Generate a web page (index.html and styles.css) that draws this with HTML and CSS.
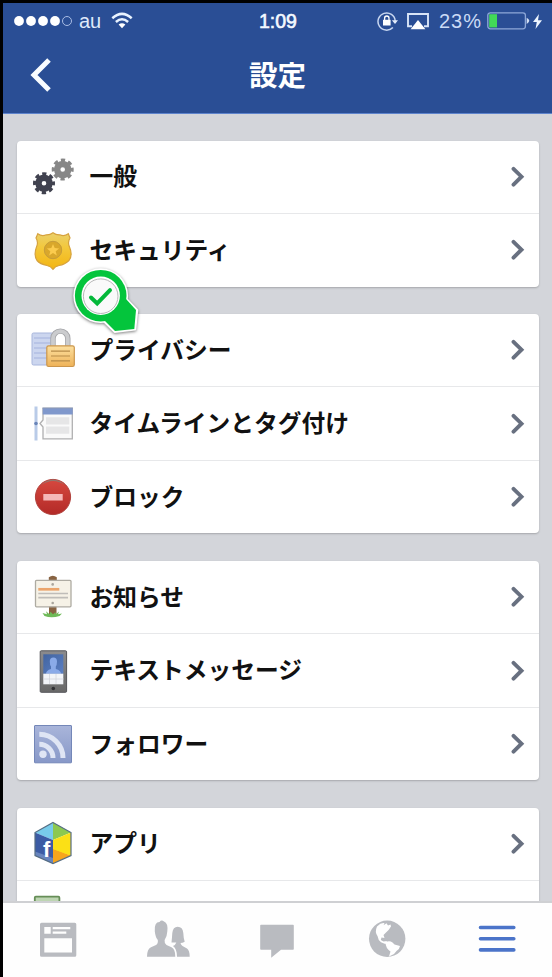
FILE: index.html
```html
<!DOCTYPE html>
<html lang="ja">
<head>
<meta charset="utf-8">
<title>設定</title>
<link rel="stylesheet" href="styles.css">
</head>
<body>
<svg width="0" height="0" class="defs">
  <defs>
    <symbol id="chevron" viewBox="0 0 14 22"><path d="M2.5 2.8L10.5 10.7L2.5 18.600" fill="none" stroke="#687080" stroke-width="3.9" stroke-linecap="round"/></symbol>
    <linearGradient id="gold" x2="0" y2="1"><stop offset="0" stop-color="#ead06c"/><stop offset=".4" stop-color="#f3c83c"/><stop offset="1" stop-color="#f3b512"/></linearGradient>
    <linearGradient id="lock" x2="0" y2="1"><stop offset="0" stop-color="#fce0a0"/><stop offset="1" stop-color="#eeb258"/></linearGradient>
    <linearGradient id="red" x2="0" y2="1"><stop offset="0" stop-color="#d6483f"/><stop offset="1" stop-color="#b32a27"/></linearGradient>
    <linearGradient id="rss" x2="0" y2="1"><stop offset="0" stop-color="#a9b5da"/><stop offset="1" stop-color="#8798c8"/></linearGradient>
    <linearGradient id="screen" x2="1" y2="1"><stop offset="0" stop-color="#42649f"/><stop offset="1" stop-color="#5b7fc4"/></linearGradient>
    <linearGradient id="steel" x2="0" y2="1"><stop offset="0" stop-color="#8b8b8d"/><stop offset="1" stop-color="#686868"/></linearGradient>
  </defs>
</svg>
<div class="phone">
  <header class="header">
    <div class="status">
      <div class="status-left">
        <svg class="signal" width="58" height="12" viewBox="0 0 58 12"><g fill="#fff"><circle cx="5" cy="6" r="4.9"/><circle cx="17" cy="6" r="4.9"/><circle cx="29" cy="6" r="4.9"/><circle cx="41" cy="6" r="4.9"/></g><circle cx="53" cy="6" r="4.5" fill="none" stroke="#a9bce4" stroke-width="1"/></svg>
        <span class="carrier">au</span>
        <svg class="wifi" width="22" height="17" viewBox="0 0 22 17"><g fill="none" stroke="#e9f3ff" stroke-width="2.5"><path d="M1.3 6.2Q11-2.4 20.7 6.2"/><path d="M4.9 10Q11 4.6 17.1 10"/></g><path d="M7.6 12.6Q11 9.8 14.4 12.6L11 16.2Z" fill="#fff"/></svg>
      </div>
      <span class="time">1:09</span>
      <div class="status-right">
        <svg width="22" height="20" viewBox="0 0 22 20"><path d="M15.9 16.4A8.6 8.6 0 1 1 18.2 10" fill="none" stroke="#c7d6f0" stroke-width="1.5"/><path d="M14.9 9.2h6.1l-3 3.8z" fill="#e4edfc"/><rect x="6" y="8.8" width="7.6" height="5.7" fill="#fff"/><path d="M7.6 9V7.2a2.2 2.2 0 0 1 4.4 0V9" fill="none" stroke="#fff" stroke-width="1.3"/></svg>
        <svg class="airplay" width="22" height="17" viewBox="0 0 22 17"><path d="M5 13.3H1V1h20v12.3h-4" fill="none" stroke="#d8e4f7" stroke-width="1.9"/><path d="M11 7l7.4 9.2H3.6z" fill="#fff"/></svg>
        <span class="percent">23%</span>
        <svg class="battery" width="43" height="18" viewBox="0 0 43 18"><rect x=".8" y=".8" width="37.6" height="16" rx="2.5" fill="none" stroke="#8ea8d8" stroke-width="1.3"/><rect x="2.2" y="2.2" width="7.8" height="13.2" fill="#42d957"/><path d="M39.7 5.7q5.2 3.1 0 6.2z" fill="#d4e0f3"/></svg>
        <svg class="bolt" width="9" height="15" viewBox="0 0 9 15"><path d="M6 0L0 8h3.800L2.500 15L9 6.200H5z" fill="#edf5ff"/></svg>
      </div>
    </div>
    <div class="navbar">
      <svg class="back" width="22" height="34" viewBox="0 0 22 34"><path d="M19 2L4 17l15 15" fill="none" stroke="#f8fcff" stroke-width="5"/></svg>
      <h1>設定</h1>
    </div>
  </header>

  <main class="content">
    <section class="card">
      <div class="row">
        <svg class="icon" viewBox="0 0 48 48">
          <g fill="none" stroke="#878787"><circle cx="33.700" cy="16.500" r="5.500" stroke-width="6.400"/><circle cx="33.700" cy="16.500" r="9.400" stroke-width="3.200" stroke-dasharray="4.200 3.183" stroke-dashoffset="2.100"/></g>
          <g fill="none" stroke="#40424f"><circle cx="15" cy="30.200" r="5.500" stroke-width="6.400"/><circle cx="15" cy="30.200" r="9.400" stroke-width="3.200" stroke-dasharray="4.200 3.183" stroke-dashoffset="2.100"/></g>
        </svg>
        <span class="label">一般</span><svg class="chev"><use href="#chevron"/></svg>
      </div>
      <div class="row">
        <svg class="icon" viewBox="0 0 48 48">
          <path d="M8.800 7.800Q13 11 17.300 8.800Q21 9 24 6.700Q27 9 30.800 8.800Q35 11 39.300 7.800L41 12Q38.300 16 40.500 21Q44 29 40 34.500Q36 38.500 30 39.500Q26 40.500 24 43.300Q22 40.500 18 39.500Q11 38 8 34.500Q4.500 29 7.500 21Q9.700 16 7 12Z" fill="url(#gold)" stroke="#d6a23e" stroke-width="1.2"/>
          <circle cx="24" cy="24" r="8.700" fill="#d9a72b" stroke="#c69c3a"/><path d="M24 18l1.700 4.100 4.400.3-3.400 2.800 1.100 4.300-3.800-2.400-3.800 2.400 1.100-4.300-3.400-2.800 4.400-.3z" fill="#fbcb4e"/>
        </svg>
        <span class="label">セキュリティ</span><svg class="chev"><use href="#chevron"/></svg>
      </div>
    </section>

    <section class="card">
      <div class="row">
        <svg class="icon" viewBox="0 0 48 48">
          <rect x="3" y="7" width="22" height="32" rx="1.500" fill="#ccd6ef" stroke="#a8b6dc"/>
          <path d="M5 12h18M5 17h16M5 22h14M5 27h14M5 32h14" stroke="#b1bfe3" stroke-width="1.600"/>
          <path d="M24 21V12.500a7.400 7.400 0 0 1 14.800 0V21" fill="none" stroke="#a4a5a8" stroke-width="5.400"/><path d="M24 21V12.500a7.400 7.400 0 0 1 14.800 0V21" fill="none" stroke="#cbccce" stroke-width="3.800"/>
          <rect x="17.800" y="19.800" width="27.500" height="20.700" rx="1.800" fill="url(#lock)" stroke="#cb964c" stroke-width="1.200"/>
          <path d="M22 25.200h19M22 30h19M22 34.800h19" stroke="#b78c48" stroke-width="1.200"/>
        </svg>
        <span class="label">プライバシー</span><svg class="chev"><use href="#chevron"/></svg>
      </div>
      <div class="row">
        <svg class="icon" viewBox="0 0 48 48">
          <rect x="5.500" y="6.500" width="3" height="34" fill="#b9cbe8"/><circle cx="7" cy="23.500" r="1.800" fill="#6985b8"/>
          <path d="M14 8.500h29.300v30.300H14V27l-3-3.500 3-3.500z" fill="#fafafa" stroke="#b0b0b1" stroke-width="1.300"/>
          <rect x="13.700" y="8" width="30" height="6.500" fill="#8098cc"/><path d="M13.500 8h30.400" stroke="#8b98b4"/>
          <path d="M17 17.300h23.300v7.200H17zM17 26.500h23.300v7.200H17z" fill="#e6e6e7"/>
        </svg>
        <span class="label">タイムラインとタグ付け</span><svg class="chev"><use href="#chevron"/></svg>
      </div>
      <div class="row">
        <svg class="icon" viewBox="0 0 48 48">
          <circle cx="24" cy="24" r="17.600" fill="url(#red)" stroke="#b1423d"/><path d="M11.500 12.500Q24 .5 36.500 12.500Q24 3.500 11.500 12.500Z" fill="#93766d"/>
          <rect x="14.300" y="21" width="19.400" height="6.500" fill="#f5b7b7"/>
        </svg>
        <span class="label">ブロック</span><svg class="chev"><use href="#chevron"/></svg>
      </div>
    </section>

    <section class="card">
      <div class="row">
        <svg class="icon" viewBox="0 0 48 48">
          <path d="M19.800 8V4.300q4-3 8 0V8zM20 33h7.500v9H20z" fill="#886342"/>
          <path d="M13.500 40l4.500 1.200-1-3 3.500 3 1-2.500 2.500 2.500 2.500-2 .5 2 3-2.700-1 2.700 4-.7-2.500 2.500q-8 2.500-15 0z" fill="#6fba58"/>
          <rect x="6.500" y="7.300" width="35.500" height="26.500" rx="1" fill="#f6f2e7" stroke="#aeaba2" stroke-width="1.300"/>
          <path d="M9.300 16.300h21" stroke="#eba56c" stroke-width="2.700"/><path d="M9.300 20.500H39M9.300 24.700H39" stroke="#bfbdb9" stroke-width="1.700"/>
          <circle cx="23.700" cy="11.400" r="1.300" fill="#aaa69d"/><circle cx="23.700" cy="30" r="1.300" fill="#aaa69d"/>
        </svg>
        <span class="label">お知らせ</span><svg class="chev"><use href="#chevron"/></svg>
      </div>
      <div class="row">
        <svg class="icon" viewBox="0 0 48 48">
          <rect x="11.200" y="3.800" width="26.400" height="41.500" rx="1" fill="url(#steel)" stroke="#55565a"/>
          <rect x="14.300" y="7.300" width="20" height="19.500" fill="url(#screen)"/>
          <path d="M17 26.700Q17 23.500 22 22V19.500Q20.800 18 20.800 14.500Q20.800 10.500 24.400 10.500T28 14.500Q28 18 26.800 19.500V22Q32 23.500 32 26.700Z" fill="#8aaae8"/>
          <rect x="14.300" y="26.700" width="20" height="10.600" fill="#f2f4f8"/><path d="M20.500 27v10M27 27v10M14.500 32h20" stroke="#d3d6dc" stroke-width=".8"/>
          <circle cx="24.300" cy="41.500" r="1.800" fill="#303034"/>
        </svg>
        <span class="label">テキストメッセージ</span><svg class="chev"><use href="#chevron"/></svg>
      </div>
      <div class="row">
        <svg class="icon" viewBox="0 0 48 48">
          <rect x="5.500" y="5.500" width="37" height="37.300" rx=".5" fill="url(#rss)" stroke="#7487b8"/>
          <circle cx="14" cy="34.300" r="3.700" fill="#dfe5f4"/><path d="M10.300 24.300A13.700 13.700 0 0 1 24 38M10.300 14.300A23.700 23.700 0 0 1 34 38" fill="none" stroke="#dfe5f4" stroke-width="5"/>
        </svg>
        <span class="label">フォロワー</span><svg class="chev"><use href="#chevron"/></svg>
      </div>
    </section>

    <section class="card">
      <div class="row">
        <svg class="icon" viewBox="0 0 48 48">
          <path d="M6 12.500L24 2.500V12L24 20z" fill="#78cbea"/><path d="M24 2.500L42 12.500 24 20z" fill="#8cc850"/>
          <path d="M6 12.500L24 20V43.500L6 35.500z" fill="#3b5ba4"/><path d="M6 31.500L24 38V43.500L6 35.500z" fill="#6784bd"/>
          <path d="M24 20L42 12.500V35.500L24 30z" fill="#fbe016"/><path d="M24 29L42 35.500 24 43.500z" fill="#f7a51b"/><path d="M24 29L42 13V35.500z" fill="#fbe016"/>
          <path d="M24 2.500L42 12.500V35.500L24 43.500L6 35.500V12.500z" fill="none" stroke="#556d83" stroke-width="1.200"/>
          <text x="14" y="37" class="cube-letter">f</text>
        </svg>
        <span class="label">アプリ</span><svg class="chev"><use href="#chevron"/></svg>
      </div>
      <div class="row">
        <svg class="icon" viewBox="0 0 48 48"><rect x="5.800" y="3.700" width="24.600" height="38" rx="1" fill="#bdd5b2" stroke="#668e57" stroke-width="1.800"/></svg>
      </div>
    </section>
  </main>

  <nav class="tabs">
    <svg class="tab" viewBox="0 0 48 48"><path fill-rule="evenodd" d="M7.500 7.700h33.300q1.500 0 1.500 1.500v31q0 1.500-1.500 1.500H7.500q-1.500 0-1.500-1.500v-31q0-1.500 1.500-1.500zM10.300 12v6.700h6.400V12zM18.700 12v2.300h17.600V12zM18.700 16.400v2.300h13.600v-2.300zM10.300 23.200v14.300H38V23.200z"/></svg>
    <svg class="tab" viewBox="0 0 48 48"><path d="M3 41.700Q3 34 7 32.300L12 30Q14.300 28.500 13.800 25Q11.500 22.500 10.800 16.500Q10 7 15.500 7Q17.500 4.500 20 6.500Q24.300 8 23.300 16.500Q23 22 20.600 25Q20.200 28.500 22.500 30L27.500 32.300Q31.300 34 31.300 41.700Z"/><path d="M33 41.700Q33 34 29 31Q31.500 30 32.300 27.500H27.500Q28 23 28.300 18Q29 11.700 33.700 11.700Q38.700 11.700 39.300 18Q39.500 23 40.700 26.700Q38.500 28 36.500 28Q37 30 38.500 31L43 33.500Q45.700 35.500 45.700 41.700Z"/></svg>
    <svg class="tab" viewBox="0 0 48 48"><path d="M8 9.700h32q.8 0 .8.8v23.500q0 .8-.8.8H28l-9.800 8V34.800H8q-.8 0-.8-.8V10.500q0-.8.8-.8z"/></svg>
    <svg class="tab" viewBox="0 0 48 48"><circle cx="24.200" cy="23.800" r="18.200"/><path fill="#fff" d="M14 11.500Q18 7.500 21.500 8.200L20.500 10.200 23.500 8.300 25 10.500 27.500 9.500 28 11.500Q26 15 23 17.500L20.500 20 21.500 23 18.500 22.500 17.800 25 20.500 26.500 24 26 22.300 29 18 27.300Q15 25 14.500 21Q11.500 17 14 11.500zM22.500 27.500Q26 25 29.500 27.500L31.500 29.500 37 31Q36.500 34.500 33.500 36L31 39 26 41.500 27.500 36.500Q22.500 33 22.500 27.500z"/></svg>
    <svg class="tab tab-active" viewBox="0 0 48 48"><path d="M7.500 12.500h33.300M7.500 23.700h33.300M7.500 34.900h33.300" stroke-width="3.600" stroke-linecap="round"/></svg>
  </nav>

  <svg class="pin" width="76" height="76" viewBox="66 262 76 76">
    <g class="pin-shape"><circle cx="100.700" cy="295.700" r="27.400" fill="#fff"/><path d="M127.300 300L137 310 135 329.300 114.700 331.700 104 321z" fill="#fff" stroke="#fff" stroke-width="2.500" stroke-linejoin="round"/></g>
    <circle cx="100.700" cy="295.700" r="25.800" fill="#04c53c"/><path d="M126 299L136 310 134.300 329 115 331 104 320z" fill="#04c53c"/>
    <circle cx="100.700" cy="295.700" r="19.200" fill="#fff"/><circle cx="100.700" cy="296.200" r="17.300" fill="#fafafa" stroke="#b8b8b8" stroke-width="1"/>
    <path d="M91 297.500L97.200 303.500 110 290.200" fill="none" stroke="#04b83a" stroke-width="4" stroke-linecap="round" stroke-linejoin="miter"/>
  </svg>
</div>
</body>
</html>
```
FILE: styles.css
```css
* { box-sizing: border-box; }
body { margin: 0; background: #000; font-family: "Liberation Sans", "Noto Sans CJK JP", sans-serif; }
.defs { position: absolute; }
svg { display: block; flex: none; }
.phone { height: 977px; padding: 3px 0 0 3px; display: flex; flex-direction: column; overflow: hidden; position: relative; }
.header { height: 111px; flex: none; background: #2a4e95; border-bottom: 1px solid #5d83cc; color: #fff; }
.status { height: 36px; display: grid; grid-template-columns: 1fr auto 1fr; align-items: center; padding: 0 10px 0 11px; }
.status-left, .status-right { display: flex; align-items: center; }
.status-right { justify-content: flex-end; }
.carrier { font-size: 20px; line-height: 24px; margin-left: 7px; color: #dfe9fa; }
.wifi { margin: -2px 0 0 10px; }
.time { font-size: 19.500px; line-height: 24px; color: #f4f9ff; -webkit-text-stroke: .6px #f4f9ff; }
.airplay { margin-left: 8px; }
.percent { font-size: 20px; line-height: 24px; margin-left: 10px; letter-spacing: 1px; color: #cbdbf6; }
.battery { margin-left: 5px; }
.bolt { margin-left: 3px; }
.navbar { height: 72px; display: grid; grid-template-columns: 1fr auto 1fr; align-items: center; }
.back { margin-left: 27px; }
.navbar h1 { margin: -2px 0 0; font: bold 28.500px/40px "Noto Sans CJK JP", sans-serif; }
.content { flex: 1; min-height: 0; overflow: hidden; background: #d3d5da; padding: 26.500px 13px 0 14px; display: flex; flex-direction: column; gap: 27.400px; }
.card { flex: none; background: #fff; border-radius: 4px; box-shadow: 0 1px 2px rgba(0, 0, 0, .22); }
.row { height: 72.500px; display: flex; align-items: center; padding: 0 14px 0 12px; }
.row + .row { height: 73.500px; border-top: 1.500px solid #e7e8ea; }
.icon { width: 48px; height: 48px; }
.label { flex: 1; margin-left: 12.500px; padding-bottom: 3px; font: bold 23.750px/36px "Noto Sans CJK JP", sans-serif; color: #111; white-space: nowrap; }
.chev { width: 14px; height: 22px; }
.cube-letter { font: bold 22px "Liberation Sans", sans-serif; fill: #fff; }
.tabs { height: 76px; flex: none; background: #fefefe; border-top: 2px solid #cfd0d3; display: grid; grid-template-columns: repeat(5, 1fr); justify-items: center; padding-top: 12px; }
.tab { width: 48px; height: 48px; fill: #b9bbc0; }
.tab-active { fill: none; stroke: #4b74c9; }
.pin { position: absolute; left: 66px; top: 262px; }
.pin-shape { filter: drop-shadow(0 1px 1.500px rgba(0, 0, 0, .5)); }
```
